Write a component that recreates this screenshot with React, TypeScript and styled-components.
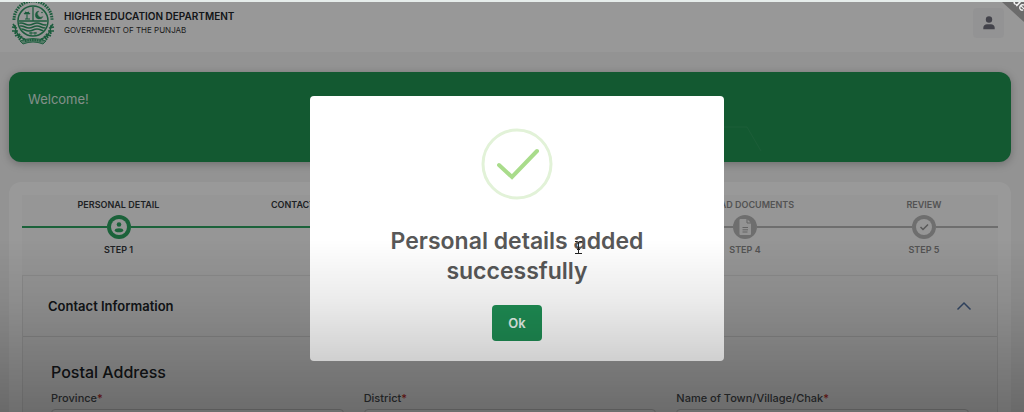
import React from "react";
import styled, { createGlobalStyle } from "styled-components";

const GlobalStyle = createGlobalStyle`
  * { box-sizing: border-box; }
  body {
    margin: 0;
    height: 100vh;
    overflow: hidden;
    background: #f5f5f5;
    color: #212529;
    font-family: Inter, "Liberation Sans", sans-serif;
  }
`;

const Header = styled.header`
  display: flex;
  align-items: center;
  justify-content: space-between;
  height: 52px;
  padding: 0 20px 6px 11px;
  background: #fdfdfd;
`;

const Brand = styled.a`
  display: flex;
  align-items: center;
  gap: 8px;
  color: inherit;
  text-decoration: none;
  line-height: 14px;
`;

const Department = styled.strong`
  display: block;
  font-size: 10px;
  font-weight: 600;
`;

const Government = styled.span`
  display: block;
  font-size: 8px;
  color: #333;
`;

const ProfileButton = styled.button`
  display: grid;
  place-items: center;
  width: 31px;
  height: 30px;
  padding: 0;
  border: 0;
  border-radius: 4px;
  background: #f6f6f7;
  color: #70717e;
`;

const Main = styled.main`
  display: flex;
  flex-direction: column;
  gap: 20px;
  padding: 20px 13px 20px 9px;
`;

const Banner = styled.section`
  position: relative;
  height: 90px;
  padding: 17px 19px;
  border-radius: 12px;
  background: #219453;
  box-shadow: 0 2px 8px rgba(0, 0, 0, 0.25);
  color: #dcefe4;
`;

const BannerPattern = styled.svg`
  position: absolute;
  top: 50px;
  right: 245px;
`;

const Welcome = styled.p`
  margin: 0;
  font-size: 13px;
  line-height: 20px;
`;

const Card = styled.section`
  padding: 13px;
  border-radius: 12px;
  background: #fff;
`;

const Steps = styled.ol`
  display: grid;
  grid-template-columns: 193fr 222fr 203fr 210fr 148fr;
  margin: 0;
  padding: 3px 0 18px;
  list-style: none;
  background: #fafafa;
`;

const Step = styled.li<{ $active?: boolean }>`
  display: flex;
  flex-direction: column;
  align-items: center;
  font-size: 9px;
  font-weight: 600;
  line-height: 14px;
  white-space: nowrap;
  color: ${(p) => (p.$active ? "#34383c" : "#8a8a8a")};
`;

const Track = styled.div<{ $active?: boolean }>`
  display: flex;
  justify-content: center;
  align-items: center;
  width: 100%;
  height: 24px;
  margin: 3px 0 4px;
  color: ${(p) => (p.$active ? "#2da361" : "#b8b8b8")};
  &::before, &::after {
    content: "";
    flex: 1;
    height: 2px;
    background: currentColor;
  }
`;

const Accordion = styled.section`
  border: 1px solid #e8e8e8;
  background: #fafafa;
`;

const AccordionHeading = styled.h2`
  margin: 0;
  border-bottom: 1px solid #dfdfdf;
`;

const AccordionButton = styled.button`
  display: flex;
  align-items: center;
  justify-content: space-between;
  width: 100%;
  height: 60px;
  padding: 0 25px;
  border: 0;
  background: transparent;
  color: #212529;
  font: 600 13px/20px Inter, "Liberation Sans", sans-serif;
`;

const AccordionBody = styled.div`
  padding: 24px 28px;
`;

const GroupTitle = styled.h3`
  margin: 0 0 7px;
  font-size: 16px;
  font-weight: 500;
  line-height: 22px;
`;

const Fields = styled.div`
  display: grid;
  grid-template-columns: repeat(3, 1fr);
  gap: 20px;
`;

const Field = styled.label`
  display: flex;
  flex-direction: column;
  gap: 3px;
  font-size: 11px;
  font-weight: 500;
  line-height: 16px;
  color: #4b4f53;
`;

const Required = styled.span`
  color: #c62828;
`;

const controlStyle = `
  width: 100%;
  height: 32px;
  border: 1px solid #cfcfcf;
  border-radius: 4px;
  background: #fff;
`;
const Select = styled.select`${controlStyle}`;
const Input = styled.input`${controlStyle}`;

const Backdrop = styled.div`
  position: fixed;
  inset: 0;
  display: flex;
  justify-content: center;
  align-items: flex-start;
  padding: 94px 0 0 10px;
  border-top: 2px solid #e6edeb;
  background: rgba(0, 0, 0, 0.4) padding-box;
`;

const Dialog = styled.div`
  display: flex;
  flex-direction: column;
  align-items: center;
  width: 414px;
  max-width: 90%;
  padding: 32px 40px 20px;
  border-radius: 4px;
  background: #fff;
  text-align: center;
`;

const DialogTitle = styled.h1`
  margin: 26px 0 19px;
  font-size: 23px;
  font-weight: 600;
  line-height: 30px;
  color: #585858;
`;

const OkButton = styled.button`
  width: 50px;
  height: 36px;
  padding: 0;
  border: 0;
  border-radius: 4px;
  background: #1f8f55;
  color: #e9f5ee;
  font: 600 13px/20px Inter, "Liberation Sans", sans-serif;
`;

const Shade = styled.div`
  position: fixed;
  inset: 0;
  pointer-events: none;
  background: linear-gradient(
    rgba(0, 0, 0, 0) 58%,
    rgba(0, 0, 0, 0.08) 73%,
    rgba(0, 0, 0, 0.18) 87%,
    rgba(0, 0, 0, 0.28) 100%
  );
`;

const Ribbon = styled.div`
  position: fixed;
  top: 2px;
  right: 0;
  width: 22px;
  height: 20px;
  overflow: hidden;
  background: #6b6b6b;
  clip-path: polygon(0 0, 100% 0, 100% 100%);
`;

const RibbonText = styled.span`
  position: absolute;
  top: -6px;
  left: 8px;
  transform: rotate(43deg);
  font-size: 12px;
  font-weight: 600;
  line-height: 14px;
  color: #f2f2f2;
`;

const Pointer = styled.svg`
  position: fixed;
  top: 240px;
  left: calc(50% + 62px);
`;

function Emblem() {
  return (
    <svg width="45" height="46" viewBox="0 0 45 46" fill="none" stroke="#2f9a66" aria-hidden="true">
      <defs>
        <clipPath id="shield"><circle cx="22" cy="21" r="14" /></clipPath>
      </defs>
      <path d="M3 20a19 19 0 0 1 38 0" strokeWidth="3" strokeDasharray="1.6 .9" />
      <circle cx="22" cy="21" r="15" strokeWidth="1.5" />
      <g clipPath="url(#shield)">
        <path d="M8 21h28M22 6v15" strokeWidth="1.3" />
        <path d="M6 24q4-2 8 0t8 0 8 0 8 0M6 27q4-2 8 0t8 0 8 0 8 0M6 30q4-2 8 0t8 0 8 0 8 0" strokeWidth="1.4" />
        <path d="M16 13v6M13 14q3-3 6 0M14 12l4 2M18 12l-4 2M14 19h5" strokeWidth="1.1" />
        <path d="M28 11a4 4 0 1 0 4 5.500a3.300 3.300 0 0 1-4-5.500z" fill="#2f9a66" strokeWidth=".4" />
        <circle cx="31" cy="12.500" r=".8" fill="#2f9a66" stroke="none" />
        <path d="M18 33h8M20 32v3M24 32v3" strokeWidth="1" />
      </g>
      <path d="M4 25c0 8 5 13 12 15M40 25c0 8-5 13-12 15" strokeWidth="1.2" />
      <path d="M1 27l5 1M1 31l6 0M4 36l5-2M8 40l3-4M2 24l3 4M5 30l-1 4M9 34l-2 4M13 38l-1 4M43 27l-5 1M43 31l-6 0M40 36l-5-2M36 40l-3-4M42 24l-3 4M39 30l1 4M35 34l2 4M31 38l1 4" strokeWidth="1.7" />
      <path d="M9 41q13-5 26 0l-3 3q-10-4-20 0z" fill="#8ccbaa" strokeWidth=".9" />
      <path d="M14 41q8-2 16 0" strokeWidth="2" strokeDasharray="1.4 1" />
    </svg>
  );
}

function UserIcon() {
  return (
    <svg width="12" height="14" viewBox="0 0 12 14" fill="currentColor" aria-hidden="true">
      <circle cx="6" cy="3.5" r="3.2" />
      <path d="M.3 13.3v-1.6C.3 9.5 2 8.300 4 8.300h4c2 0 3.700 1.200 3.700 3.400v1.600z" />
    </svg>
  );
}

type Kind = "person" | "document" | "check";

function StepIcon({ kind }: { kind: Kind }) {
  return (
    <svg width="24" height="24" viewBox="0 0 24 24" aria-hidden="true">
      <circle cx="12" cy="12" r="12" fill="currentColor" />
      {kind !== "document" && <circle cx="12" cy="12" r="8" fill="#fafafa" />}
      {kind === "person" && (
        <g fill="currentColor">
          <circle cx="12" cy="9.500" r="2.300" />
          <ellipse cx="12" cy="15.300" rx="4.200" ry="2" />
        </g>
      )}
      {kind === "check" && (
        <path d="M8.500 12l2.500 2.500 5-5" fill="none" stroke="#929292" strokeWidth="1.500" />
      )}
      {kind === "document" && (
        <>
          <path d="M7.500 4h6.500l4 4v11a1 1 0 0 1-1 1H7.500a1 1 0 0 1-1-1V5a1 1 0 0 1 1-1z" fill="#f6f6f6" />
          <path d="M14 4v4h4M9.500 12.500h5.500M9.500 14.800h5.500M9.500 17h5" fill="none" stroke="#a6a6a6" />
        </>
      )}
    </svg>
  );
}

const steps: { label: string; kind: Kind; active?: boolean }[] = [
  { label: "PERSONAL DETAIL", kind: "person", active: true },
  { label: "CONTACT INFORMATION", kind: "person", active: true },
  { label: "QUALIFICATION", kind: "document" },
  { label: "UPLOAD DOCUMENTS", kind: "document" },
  { label: "REVIEW", kind: "check" },
];

export default function App() {
  return (
    <>
      <GlobalStyle />
      <Header>
        <Brand href="#">
          <Emblem />
          <span>
            <Department>HIGHER EDUCATION DEPARTMENT</Department>
            <Government>GOVERNMENT OF THE PUNJAB</Government>
          </span>
        </Brand>
        <ProfileButton aria-label="Profile"><UserIcon /></ProfileButton>
      </Header>
      <Main>
        <Banner>
          <BannerPattern width="50" height="32" viewBox="0 0 50 32" fill="none" stroke="#3ba368" strokeOpacity=".5" aria-hidden="true">
            <path d="M0 5h31l14 24" />
          </BannerPattern>
          <Welcome>Welcome!</Welcome>
        </Banner>
        <Card>
          <Steps>
            {steps.map((step, i) => (
              <Step key={step.label} $active={step.active}>
                {step.label}
                <Track $active={step.active}><StepIcon kind={step.kind} /></Track>
                STEP {i + 1}
              </Step>
            ))}
          </Steps>
          <Accordion>
            <AccordionHeading>
              <AccordionButton aria-expanded="true">
                Contact Information
                <svg width="16" height="10" viewBox="0 0 16 10" fill="none" stroke="#5577a8" strokeWidth="1.500" aria-hidden="true">
                  <path d="M1.500 8.500L8 2l6.500 6.500" />
                </svg>
              </AccordionButton>
            </AccordionHeading>
            <AccordionBody>
              <GroupTitle>Postal Address</GroupTitle>
              <Fields>
                <Field><span>Province<Required>*</Required></span><Select /></Field>
                <Field><span>District<Required>*</Required></span><Select /></Field>
                <Field><span>Name of Town/Village/Chak<Required>*</Required></span><Input type="text" /></Field>
              </Fields>
            </AccordionBody>
          </Accordion>
        </Card>
      </Main>
      <Backdrop>
        <Dialog role="dialog" aria-modal="true" aria-labelledby="dialog-title">
          <svg width="72" height="72" viewBox="0 0 72 72" fill="none" aria-hidden="true">
            <circle cx="36" cy="36" r="34" stroke="#e2f2d8" strokeWidth="3" />
            <path d="M18 37l13 12L56 23" stroke="#a9dc8b" strokeWidth="4" strokeLinecap="round" />
          </svg>
          <DialogTitle id="dialog-title">Personal details added successfully</DialogTitle>
          <OkButton>Ok</OkButton>
        </Dialog>
      </Backdrop>
      <Ribbon><RibbonText>ide</RibbonText></Ribbon>
      <Shade />
      <Pointer width="9" height="15" viewBox="0 0 9 15" fill="none" stroke="#222" aria-hidden="true">
        <path d="M1 1.500h2.500l1 1 1-1H8M4.500 2v11M1 13.500h7M3 9.500h3" />
      </Pointer>
    </>
  );
}
